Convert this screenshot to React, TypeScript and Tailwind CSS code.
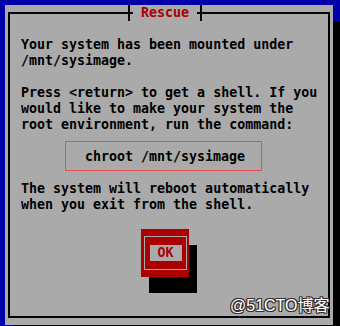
import React from "react";

const mono = { fontFamily: '"DejaVu Sans Mono", "Liberation Mono", monospace' };

function Tick() {
  return (
    <div className="w-[8px] h-[16px] flex justify-center">
      <div className="w-[2px] h-full bg-black" />
    </div>
  );
}

export default function App() {
  return (
    <div
      className="relative w-[340px] h-[326px] overflow-hidden bg-[#0000aa] pt-[5px] pl-[5px]"
      style={mono}
    >
      <div className="relative w-[328px] h-[320px] bg-[#aaaaaa] shadow-[8px_16px_0_0_#000] pt-[7px] pb-[7px] pl-[3px] pr-[3px]">
        <div className="relative w-full h-full border-2 border-black">
          {/* title */}
          <div className="absolute top-[-9px] left-[115px] flex h-[16px]">
            <Tick />
            <div className="w-[64px] h-[16px] bg-[#aaaaaa] text-center text-[#aa0000] text-[13.3px] font-bold leading-[16px]">
              Rescue
            </div>
            <Tick />
          </div>

          {/* content */}
          <div className="flex flex-col pl-[11px] pt-[23px] text-black text-[13.3px] font-bold leading-[16px] whitespace-pre">
            <div>Your system has been mounted under</div>
            <div>/mnt/sysimage.</div>
            <div>&nbsp;</div>
            <div>Press &lt;return&gt; to get a shell. If you</div>
            <div>would like to make your system the</div>
            <div>root environment, run the command:</div>
            <div className="mt-[8px] ml-[44px] w-[197px] h-[30px] border border-[#e85050] pt-[7px] pl-[19px]">
              chroot /mnt/sysimage
            </div>
            <div className="mt-[10px]">The system will reboot automatically</div>
            <div>when you exit from the shell.</div>
            <div className="mt-[16px] ml-[120px] w-[48px] h-[48px] bg-[#aa0000] shadow-[8px_16px_0_0_#000] pt-[7px] pb-[7px] pl-[3px] pr-[2px]">
              <div className="w-full h-full border border-[#aaaaaa] flex items-center justify-center">
                <div className="w-[32px] h-[16px] bg-[#aaaaaa] text-[#aa0000] text-center leading-[16px]">
                  OK
                </div>
              </div>
            </div>
          </div>
        </div>
      </div>

      {/* watermark */}
      <div
        className="absolute left-[230px] top-[296px] text-[16px] leading-[20px] text-white"
        style={{
          fontFamily: '"Liberation Sans", "Noto Sans CJK SC", sans-serif',
          textShadow:
            "1px 0 0 #333, -1px 0 0 #333, 0 1px 0 #333, 0 -1px 0 #333, 1px 1px 0 #333, -1px -1px 0 #333, 1px -1px 0 #333, -1px 1px 0 #333",
        }}
      >
        @51CTO博客
      </div>
    </div>
  );
}
